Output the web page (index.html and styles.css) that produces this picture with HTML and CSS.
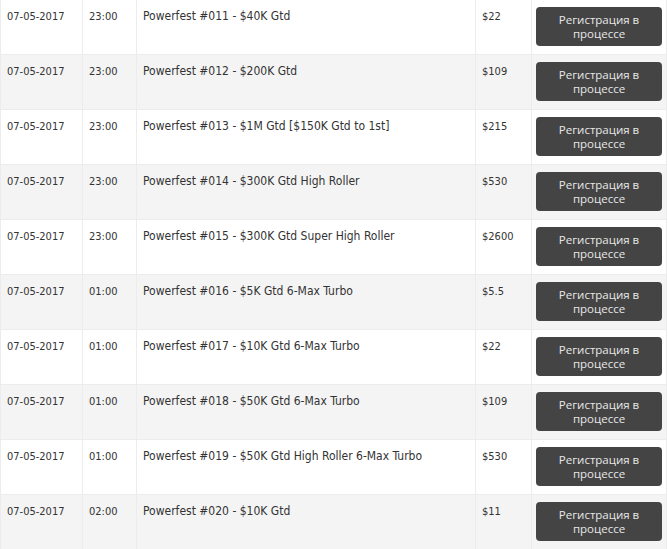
FILE: index.html
```html
<!DOCTYPE html>
<html lang="ru">
<head>
<meta charset="utf-8">
<title>Powerfest</title>
<link rel="stylesheet" href="styles.css">
</head>
<body>
<div class="list">
  <div class="row"><div class="cell">07-05-2017</div><div class="cell">23:00</div><div class="cell name">Powerfest #011 - $40K Gtd</div><div class="cell">$22</div><div class="cell act"><button class="btn">Регистрация в процессе</button></div></div>
  <div class="row"><div class="cell">07-05-2017</div><div class="cell">23:00</div><div class="cell name">Powerfest #012 - $200K Gtd</div><div class="cell">$109</div><div class="cell act"><button class="btn">Регистрация в процессе</button></div></div>
  <div class="row"><div class="cell">07-05-2017</div><div class="cell">23:00</div><div class="cell name">Powerfest #013 - $1M Gtd [$150K Gtd to 1st]</div><div class="cell">$215</div><div class="cell act"><button class="btn">Регистрация в процессе</button></div></div>
  <div class="row"><div class="cell">07-05-2017</div><div class="cell">23:00</div><div class="cell name">Powerfest #014 - $300K Gtd High Roller</div><div class="cell">$530</div><div class="cell act"><button class="btn">Регистрация в процессе</button></div></div>
  <div class="row"><div class="cell">07-05-2017</div><div class="cell">23:00</div><div class="cell name">Powerfest #015 - $300K Gtd Super High Roller</div><div class="cell">$2600</div><div class="cell act"><button class="btn">Регистрация в процессе</button></div></div>
  <div class="row"><div class="cell">07-05-2017</div><div class="cell">01:00</div><div class="cell name">Powerfest #016 - $5K Gtd 6-Max Turbo</div><div class="cell">$5.5</div><div class="cell act"><button class="btn">Регистрация в процессе</button></div></div>
  <div class="row"><div class="cell">07-05-2017</div><div class="cell">01:00</div><div class="cell name">Powerfest #017 - $10K Gtd 6-Max Turbo</div><div class="cell">$22</div><div class="cell act"><button class="btn">Регистрация в процессе</button></div></div>
  <div class="row"><div class="cell">07-05-2017</div><div class="cell">01:00</div><div class="cell name">Powerfest #018 - $50K Gtd 6-Max Turbo</div><div class="cell">$109</div><div class="cell act"><button class="btn">Регистрация в процессе</button></div></div>
  <div class="row"><div class="cell">07-05-2017</div><div class="cell">01:00</div><div class="cell name">Powerfest #019 - $50K Gtd High Roller 6-Max Turbo</div><div class="cell">$530</div><div class="cell act"><button class="btn">Регистрация в процессе</button></div></div>
  <div class="row"><div class="cell">07-05-2017</div><div class="cell">02:00</div><div class="cell name">Powerfest #020 - $10K Gtd</div><div class="cell">$11</div><div class="cell act"><button class="btn">Регистрация в процессе</button></div></div>
</div>
</body>
</html>
```
FILE: styles.css
```css
* { box-sizing: border-box; }
html, body { margin: 0; padding: 0; background: #fff; }
body {
  font-family: "DejaVu Sans Condensed", "DejaVu Sans", sans-serif;
  font-stretch: condensed;
  font-size: 11px;
  color: #333;
  overflow: hidden;
}
.list { width: 667px; }
.row {
  display: grid;
  grid-template-columns: 82px 54px 339px 56px 136px;
  height: 55px;
  border-bottom: 1px solid #ececec;
  background: #fff;
}
.row:nth-child(even) { background: #f4f4f4; }
.cell {
  border-left: 1px solid #ececec;
  padding: 9px 5px 0 6px;
  line-height: 15px;
  white-space: nowrap;
}
.cell.name {
  font-size: 12px;
}
.cell.act {
  border-right: 1px solid #ececec;
  padding: 7px 4px 0 4px;
}
.btn {
  display: block;
  width: 126px;
  height: 39px;
  margin: 0;
  padding: 0 8px;
  border: 0;
  border-radius: 4px;
  background: #444;
  color: #e8e8e8;
  font-family: "Open Sans", "Noto Sans", sans-serif;
  font-size: 11.5px;
  line-height: 14px;
  text-align: center;
  white-space: normal;
}
```
